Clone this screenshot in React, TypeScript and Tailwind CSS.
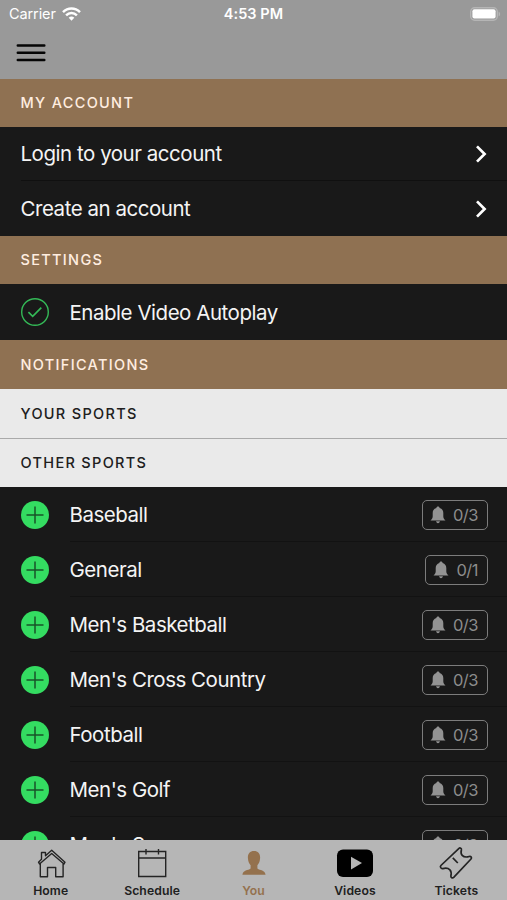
import type { ReactNode } from "react";

function SectionHeader({ label, className }: { label: string; className: string }) {
  return (
    <div className={`flex shrink-0 items-center pl-[20.500px] text-[14.5px] font-medium leading-5 tracking-[1.32px] ${className}`}>
      {label}
    </div>
  );
}

function Chevron() {
  return (
    <svg className="mr-5 h-[18px] w-3" viewBox="0 0 12 18" fill="none" stroke="#fff" strokeWidth="2.7">
      <path d="M2 1.400 9.600 9 2 16.600" />
    </svg>
  );
}

function AccountRow({ label, divided }: { label: string; divided?: boolean }) {
  return (
    <div className="h-[54.5px] shrink-0 pl-[20.500px]">
      <div className={`flex h-full items-center justify-between border-b pt-[2px] ${divided ? "border-[#101010]" : "border-transparent"}`}>
        <span className="text-[20.5px] leading-6 tracking-[-0.47px]">{label}</span>
        <Chevron />
      </div>
    </div>
  );
}

function Bell() {
  return (
    <svg className="h-[18px] w-4" viewBox="0 0 16 18" fill="#939393">
      <path d="M8 .5c.9 0 1.5.6 1.6 1.400C12.100 2.600 13.300 4.500 13.300 7v3.200c0 2.100.700 2.800 2.200 4.300H.5c1.500-1.500 2.200-2.200 2.200-4.300V7c0-2.500 1.200-4.400 3.700-5.100C6.500 1.100 7.100.5 8 .5ZM6.100 15.300h3.800c-.1 1.100-.9 1.900-1.900 1.900s-1.800-.8-1.900-1.900Z" />
    </svg>
  );
}

function SportRow({ name, count }: { name: string; count: string }) {
  return (
    <div className="flex h-[55px] shrink-0 pl-[21px]">
      <svg className="mt-[13.500px] h-7 w-7 shrink-0" viewBox="0 0 28 28">
        <circle cx="14" cy="14" r="14" fill="#34dc61" />
        <path d="M5.500 14h17M14 5.500v17" stroke="#185328" strokeWidth="1.500" />
      </svg>
      <div className="ml-[20.500px] flex flex-1 items-center justify-between border-b border-[#121212] pt-[2px] pr-[19px]">
        <span className="text-[20.5px] leading-6 tracking-[-0.48px]">{name}</span>
        <span className="flex h-[30px] items-center gap-[7px] rounded-[5px] border-[1.5px] border-[#7c7c7c] pr-[9px] pl-[7px] text-[16.500px] leading-5 tracking-[-0.5px] text-[#8c8c8c]">
          <Bell />
          {count}
        </span>
      </div>
    </div>
  );
}

function Tab({ label, color, children }: { label: string; color: string; children: ReactNode }) {
  return (
    <div className={`flex flex-1 flex-col items-center pt-1.5 text-[12.200px] leading-4 font-semibold tracking-[0.1px] ${color}`}>
      <svg className="mb-[2.500px] h-[34px] w-10" viewBox="0 0 40 34" fill="none" stroke="#242424" strokeWidth="1.400">
        {children}
      </svg>
      {label}
    </div>
  );
}

const sports = [
  ["Baseball", "0/3"],
  ["General", "0/1"],
  ["Men's Basketball", "0/3"],
  ["Men's Cross Country", "0/3"],
  ["Football", "0/3"],
  ["Men's Golf", "0/3"],
  ["Men's Soccer", "0/3"],
];

export default function App() {
  return (
    <div className="flex h-[900px] w-[507px] flex-col overflow-hidden bg-[#191919] font-['Inter',sans-serif] text-[#f4f4f4]">
      <header className="h-[79px] shrink-0 bg-[#999]">
        <div className="grid h-7 grid-cols-3 items-center pl-[9px] pr-[6px] text-[14.5px] leading-5 text-white">
          <div className="flex items-center gap-[6px]">
            <span className="tracking-[-0.1px]">Carrier</span>
            <svg className="h-[14px] w-[19px]" viewBox="0 0 19 14" fill="none" stroke="#fff" strokeWidth="2.500">
              <path d="M1 5.100C5.900.2 13.100.2 18 5.100M4.100 8.300c3.100-3 7.700-3 10.800 0" />
              <path d="M6.700 10.700c1.700-1.500 3.900-1.500 5.600 0L9.500 13.700Z" fill="#fff" stroke="none" />
            </svg>
          </div>
          <span className="-ml-[3px] text-center font-semibold tracking-[0.050px]">4:53 PM</span>
          <svg className="h-[14px] w-[31px] justify-self-end" viewBox="0 0 31 14">
            <rect x=".7" y=".7" width="26.600" height="12.600" rx="4" fill="none" stroke="#b5b5b5" strokeWidth="1.400" />
            <rect x="2.400" y="2.300" width="23.200" height="9.200" rx="2" fill="#fff" />
            <path d="M28.600 4.700c2 .6 2 4 0 4.600Z" fill="#b5b5b5" />
          </svg>
        </div>
        <svg className="mt-4 ml-4 h-[18px] w-[30px]" viewBox="0 0 30 18" stroke="#050505" strokeWidth="2.500" strokeLinecap="round">
          <path d="M1.800 1.500h26.500M1.800 8.700h26.500M1.800 15.900h26.500" />
        </svg>
      </header>

      <SectionHeader label="MY ACCOUNT" className="h-[47.500px] bg-[#8f7152] text-[#ffede0]" />
      <AccountRow label="Login to your account" divided />
      <AccountRow label="Create an account" />
      <SectionHeader label="SETTINGS" className="h-[48.500px] bg-[#8f7152] text-[#ffede0]" />
      <div className="flex h-[55.500px] shrink-0 items-center gap-[20.500px] pt-[1px] pl-[21px]">
        <svg className="h-7 w-7" viewBox="0 0 28 28" fill="none" stroke="#34b957">
          <circle cx="14" cy="14" r="13.300" strokeWidth="1.400" />
          <path d="m7.400 14.200 4.300 4.200 8.600-8.800" strokeWidth="1.700" />
        </svg>
        <span className="pt-[2px] text-[20.5px] leading-6 tracking-[-0.47px]">Enable Video Autoplay</span>
      </div>
      <SectionHeader label="NOTIFICATIONS" className="h-[49.500px] bg-[#8f7152] pt-[1px] text-[#ffede0]" />
      <SectionHeader label="YOUR SPORTS" className="h-[49.500px] border-b border-[#aaa] bg-[#eaeaea] pt-[1px] text-[#202020]" />
      <SectionHeader label="OTHER SPORTS" className="h-[48.500px] bg-[#eaeaea] text-[#202020]" />

      <div className="flex min-h-0 flex-1 flex-col overflow-hidden">
        {sports.map(([name, count]) => (
          <SportRow key={name} name={name} count={count} />
        ))}
      </div>

      <nav className="flex h-[60px] shrink-0 bg-[#b6b6b6]">
        <Tab label="Home" color="text-[#202020]">
          <path d="M9.300 16.500v14.300h7.200v-9.300h8.200v9.300h7.400V16.500M8.500 18 20.700 7.500 33 18l1-1.800L20.700 4.200l-6.200 5.500V6.500h-4v6.800l-3 2.900Z" strokeLinejoin="round" />
        </Tab>
        <Tab label="Schedule" color="text-[#202020]">
          <path d="M6.700 5.500h27v25h-27zM6.700 12h27M14 3v5.500M26.500 3v5.500" />
        </Tab>
        <Tab label="You" color="text-[#94714d]">
          <path d="M20 5c4.200 0 6.400 2.900 6.100 7-.2 3.300-1.100 5.400-2.700 7.300v3.200c2.500 2 7.700 1.400 8.200 6.200H8.400c.5-4.800 5.700-4.200 8.200-6.200v-3.200c-1.600-1.900-2.500-4-2.700-7.300C13.600 7.900 15.800 5 20 5Z" fill="#94714d" stroke="none" />
        </Tab>
        <Tab label="Videos" color="text-[#202020]">
          <rect x="2" y="3.500" width="36" height="27.500" rx="6" fill="#000" stroke="none" />
          <path d="M16 10.700 27 17l-11 6.600Z" fill="#b6b6b6" stroke="none" />
        </Tab>
        <Tab label="Tickets" color="text-[#202020]">
          <path d="M4.900 19.500 23 2.300c1-.9 2.700 0 2.400 1.400-.6 2.300-.6 4.200.8 5.700 1.800 1.900 4.300 1.900 7 1.100 1.700-.5 3 1.300 1.800 2.500L17.700 31.300c-1.200 1.200-3.200.2-2.800-1.500.6-2.600.4-4.500-1-6-1.800-1.800-4.200-1.900-7-1.200-1.900.5-3.200-1.900-2-3.100ZM16.800 11.800l5 5.200" strokeWidth="1.700" strokeLinejoin="round" />
        </Tab>
      </nav>
    </div>
  );
}
